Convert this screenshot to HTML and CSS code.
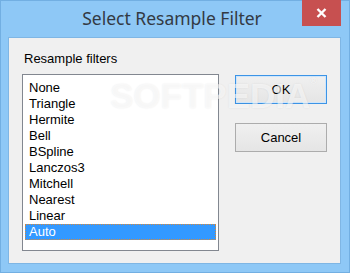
FILE: index.html
```html
<!DOCTYPE html>
<html lang="en">
<head>
    <meta charset="UTF-8">
    <title>Select Resample Filter</title>
    <link rel="stylesheet" href="styles.css">
</head>
<body>
    <div class="window">
        <div class="titlebar">
            <span></span>
            <span class="title">Select Resample Filter</span>
            <button type="button" class="close-btn" aria-label="Close">
                <svg width="11" height="10" viewBox="0 0 11 10">
                    <path d="M1.5 1 L9.5 9 M9.5 1 L1.5 9" stroke="#fff" stroke-width="2.4" fill="none"/>
                </svg>
            </button>
        </div>

        <div class="client">
            <div class="filters">
                <div class="group-label">Resample filters</div>
                <ul class="listbox">
                    <li>None</li>
                    <li>Triangle</li>
                    <li>Hermite</li>
                    <li>Bell</li>
                    <li>BSpline</li>
                    <li>Lanczos3</li>
                    <li>Mitchell</li>
                    <li>Nearest</li>
                    <li>Linear</li>
                    <li class="selected">Auto</li>
                </ul>
            </div>

            <div class="actions">
                <button type="button" class="btn default">OK</button>
                <button type="button" class="btn">Cancel</button>
            </div>

            <div class="watermark">SOFTPEDIA<sup>®</sup></div>
        </div>
    </div>
</body>
</html>
```

FILE: styles.css
```css
body {
    margin: 0;
    padding: 0;
    font-family: 'Liberation Sans', Arial, sans-serif;
    background-color: #8ec8f6;
}

.window {
    width: 350px;
    height: 273px;
    box-sizing: border-box;
    background-color: #8ec8f6;
    box-shadow: inset 0 0 0 1px #72afe2;
    display: flex;
    flex-direction: column;
}

.titlebar {
    height: 38px;
    display: grid;
    grid-template-columns: 1fr auto 1fr;
    align-items: start;
}

.title {
    font-family: 'Noto Sans', 'Open Sans', sans-serif;
    font-size: 17.5px;
    color: #333a44;
    padding-top: 6px;
    line-height: 24px;
    margin-left: -6px;
}

.close-btn {
    justify-self: end;
    width: 39px;
    height: 26px;
    margin-right: 9px;
    border: none;
    padding: 0;
    background-color: #c75050;
    display: flex;
    align-items: center;
    justify-content: center;
}

.client {
    position: relative;
    flex: 1;
    margin: 0 10px 10px 9px;
    background-color: #f0f0f0;
    box-shadow: 0 0 0 1px #7fb6e4;
    padding: 13px 0 0 13px;
    display: flex;
    gap: 16px;
    align-items: flex-start;
}

.group-label {
    font-size: 13px;
    line-height: 15px;
    color: #000;
    padding-left: 2px;
    margin-bottom: 8px;
}

.listbox {
    list-style: none;
    margin: 0;
    width: 197px;
    height: 177px;
    box-sizing: border-box;
    padding: 5px 2px 0 2px;
    background-color: #fff;
    border: 1px solid #828790;
}

.listbox li {
    font-size: 13px;
    line-height: 16px;
    height: 16px;
    padding-left: 4px;
    color: #000;
}

.listbox li.selected {
    background-color: #3399ff;
    color: #fff;
    outline: 1px dotted #d8893a;
    outline-offset: -1px;
}

.actions {
    margin-top: 24px;
    display: flex;
    flex-direction: column;
    gap: 19px;
}

.btn {
    width: 92px;
    height: 29px;
    font-family: 'Liberation Sans', Arial, sans-serif;
    font-size: 13px;
    color: #000;
    border: 1px solid #acacac;
    background: linear-gradient(#f0f0f0, #e5e5e5);
    padding: 0;
}

.btn.default {
    border-color: #3c94e6;
    box-shadow: inset 0 0 0 1px #cfe6fb;
}

.watermark {
    position: absolute;
    left: 101px;
    top: 38px;
    font-size: 35px;
    font-weight: bold;
    color: rgba(255, 255, 255, 0.6);
    text-shadow: 0 0 2px rgba(0, 0, 0, 0.08);
    pointer-events: none;
}

.watermark sup {
    font-size: 9px;
    vertical-align: top;
}
```
